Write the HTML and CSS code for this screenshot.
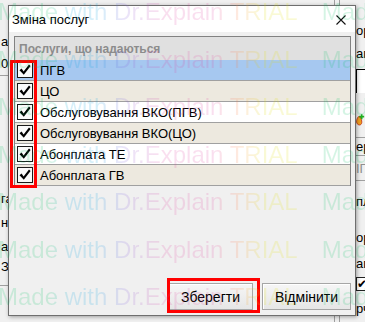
FILE: index.html
```html
<!DOCTYPE html>
<html lang="uk">
<head>
    <meta charset="UTF-8">
    <title>Зміна послуг</title>
    <link rel="stylesheet" href="styles.css">
</head>
<body>
    <!-- вікно позаду діалогу -->
    <div class="desk">
        <div class="desk-left">
            <div class="dl-cell"></div>
            <div class="dl-cell">а</div>
            <div class="dl-cell line">00</div>
            <div class="dl-cell"></div>
            <div class="dl-cell">га</div>
            <div class="dl-cell">на</div>
            <div class="dl-cell">ал</div>
            <div class="dl-cell">ЗІ</div>
            <div class="dl-cell line"></div>
        </div>
        <div class="desk-mid"></div>
        <div class="desk-right">
            <div class="dr-cell"></div>
            <div class="dr-cell">ор</div>
            <div class="dr-cell">аг</div>
            <div class="dr-cell"><span class="dr-box"></span></div>
            <div class="dr-cell">
                <svg class="dr-icon" width="12" height="16" viewBox="0 0 12 16">
                    <path d="M4 4 C1 8 1 13 5 14 C9 14 9 9 6 4 Z" fill="#f2a020" stroke="#c03010" stroke-width="1"/>
                    <path d="M8 1 V7 M5 4 H11" stroke="#20b020" stroke-width="2"/>
                </svg>
            </div>
            <div class="dr-cell line"></div>
            <div class="dr-cell line">ер</div>
            <div class="dr-cell line grey">ІГ</div>
            <div class="dr-cell">пл</div>
            <div class="dr-cell">ор</div>
            <div class="dr-cell">аг</div>
            <div class="dr-cell"><span class="dr-check">✔</span></div>
            <div class="dr-cell">рч</div>
        </div>
    </div>

    <div class="dialog">
        <div class="titlebar">
            <span class="title">Зміна послуг</span>
            <span class="close">
                <svg width="10" height="10" viewBox="0 0 10 10">
                    <path d="M0.5 0.5 L9.5 9.5 M9.5 0.5 L0.5 9.5" stroke="#111" stroke-width="1.1"/>
                </svg>
            </span>
        </div>
        <div class="dialog-body">
            <div class="grid">
                <div class="grid-head">Послуги, що надаються</div>
                <div class="grid-row selected"><span class="check"></span><span>ПГВ</span></div>
                <div class="grid-row odd"><span class="check"></span><span>ЦО</span></div>
                <div class="grid-row"><span class="check"></span><span>Обслуговування ВКО(ПГВ)</span></div>
                <div class="grid-row odd"><span class="check"></span><span>Обслуговування ВКО(ЦО)</span></div>
                <div class="grid-row"><span class="check"></span><span>Абонплата ТЕ</span></div>
                <div class="grid-row odd"><span class="check"></span><span>Абонплата ГВ</span></div>
            </div>
            <div class="buttons">
                <button class="btn btn-save">Зберегти</button>
                <button class="btn btn-cancel">Відмінити</button>
            </div>
        </div>
    </div>

    <!-- червоні рамки-підказки -->
    <div class="mark mark-checks"></div>
    <div class="mark mark-save"></div>

    <div class="watermark">
        <div class="wm-row"><span class="wm">Made with Dr.Explain TRIAL</span><span class="wm">Made with Dr.Explain TRIAL</span></div>
        <div class="wm-row"><span class="wm">Made with Dr.Explain TRIAL</span><span class="wm">Made with Dr.Explain TRIAL</span></div>
        <div class="wm-row"><span class="wm">Made with Dr.Explain TRIAL</span><span class="wm">Made with Dr.Explain TRIAL</span></div>
        <div class="wm-row"><span class="wm">Made with Dr.Explain TRIAL</span><span class="wm">Made with Dr.Explain TRIAL</span></div>
        <div class="wm-row"><span class="wm">Made with Dr.Explain TRIAL</span><span class="wm">Made with Dr.Explain TRIAL</span></div>
        <div class="wm-row"><span class="wm">Made with Dr.Explain TRIAL</span><span class="wm">Made with Dr.Explain TRIAL</span></div>
        <div class="wm-row"><span class="wm">Made with Dr.Explain TRIAL</span><span class="wm">Made with Dr.Explain TRIAL</span></div>
    </div>
</body>
</html>
```

FILE: styles.css
```css
* {
    box-sizing: border-box;
}

body {
    margin: 0;
    width: 365px;
    height: 322px;
    overflow: hidden;
    position: relative;
    background-color: #f0f0f0;
    font-family: 'Liberation Sans', Arial, sans-serif;
    font-size: 13px;
    color: #000;
}

/* фонове вікно */
.desk {
    display: grid;
    grid-template-columns: 60px 1fr 31px;
    height: 322px;
}

.desk-left {
    display: grid;
    grid-template-rows: 30px 22px 24px 111px 23px 24px 24px 16px 12px 1fr;
}

.dl-cell {
    display: flex;
    align-items: center;
    padding-left: 1px;
    white-space: nowrap;
    overflow: hidden;
}

.dl-cell.line {
    border-bottom: 1px solid #a0a0a0;
}

.desk-right {
    display: grid;
    grid-template-rows: 20px 21px 24px 40px 29px 4px 18px 25px 40px 32px 21px 20px 1fr;
    border-left: 1px solid #a0a0a0;
    padding-left: 21px;
    position: relative;
}

.desk-right::before {
    content: '';
    position: absolute;
    left: 4px;
    top: 0;
    bottom: 0;
    border-left: 1px solid #a0a0a0;
}

.dr-cell {
    display: flex;
    align-items: center;
    white-space: nowrap;
    overflow: hidden;
}

.dr-cell.line {
    border-bottom: 1px solid #a0a0a0;
}

.dr-cell.grey {
    color: #909090;
}

.dr-box {
    display: block;
    width: 20px;
    height: 24px;
    margin-top: -8px;
    background: #fff;
    border-left: 1px solid #000;
    border-top: 1px solid #000;
}

.dr-icon {
    margin-left: -1px;
}

.dr-check {
    font-size: 12px;
    display: inline-block;
    border: 1px solid #222;
    background: #fff;
    width: 14px;
    height: 14px;
    line-height: 12px;
}

/* діалог */
.dialog {
    position: absolute;
    left: 8px;
    top: 5px;
    width: 348px;
    height: 311px;
    border: 1px solid #6e6e6e;
    background-color: #f0f0f0;
    box-shadow: 1px 1px 4px rgba(0, 0, 0, 0.35);
    display: flex;
    flex-direction: column;
}

.titlebar {
    height: 26px;
    background-color: #fff;
    display: flex;
    align-items: center;
    justify-content: space-between;
    padding-left: 3px;
    padding-right: 9px;
}

.title {
    font-size: 13px;
}

.close {
    display: flex;
    margin-top: 1px;
}

.dialog-body {
    flex: 1;
    display: flex;
    flex-direction: column;
    padding: 4px 4px 4px 5px;
}

.grid {
    border: 1px solid #828282;
    border-bottom: none;
}

.grid-head {
    height: 23px;
    background-color: #e0e0e0;
    color: #8c8c8c;
    font-weight: bold;
    font-size: 12px;
    display: flex;
    align-items: center;
    padding-left: 4px;
}

.grid-row {
    height: 21px;
    background-color: #fff;
    border-bottom: 1px solid #a0a0a0;
    display: flex;
    align-items: center;
    gap: 7px;
    padding-left: 2px;
}

.grid-row.odd {
    background-color: #ede9df;
}

.grid-row.selected {
    background-color: #a6c8f0;
}

.check {
    width: 16px;
    height: 16px;
    border: 1px solid #1a1a1a;
    background: #fafafa url("data:image/svg+xml,%3Csvg xmlns='http://www.w3.org/2000/svg' viewBox='0 0 14 14'%3E%3Cpath d='M1.5 7.2 L3.6 5.6 L5.6 8.4 L11 1.6 L12.6 2.9 L5.8 11.8 Z' fill='%23000'/%3E%3C/svg%3E") center / 14px 14px no-repeat;
}

.buttons {
    margin-top: auto;
    display: flex;
    justify-content: flex-end;
    gap: 9px;
    margin-bottom: 1px;
}

.btn {
    height: 27px;
    font-family: 'Liberation Sans', Arial, sans-serif;
    font-size: 14px;
    color: #000;
    background: linear-gradient(#f6f6f6, #e6e6e6);
    border: 1px solid #a6a6a6;
    border-radius: 0;
    box-shadow: inset 1px 1px 0 #fff;
    padding: 0;
}

.btn-save {
    width: 85px;
}

.btn-cancel {
    width: 89px;
}

/* червоні рамки */
.mark {
    position: absolute;
    border: 3px solid #ff0000;
}

.mark-checks {
    left: 10px;
    top: 60px;
    width: 27px;
    height: 128px;
}

.mark-save {
    left: 167px;
    top: 278px;
    width: 93px;
    height: 35px;
}

/* водяний знак */
.watermark {
    position: absolute;
    left: -2px;
    top: -12px;
    right: 0;
    pointer-events: none;
    opacity: 0.16;
}

.wm-row {
    height: 47.5px;
    line-height: 47.5px;
    white-space: nowrap;
    font-family: 'Liberation Sans', Arial, sans-serif;
    font-size: 24px;
}

.wm {
    display: inline-block;
    color: transparent;
    background: linear-gradient(90deg, #00c060 0%, #00c060 17%, #00a0e0 24%, #00a0e0 33%, #8060e0 42%, #e040a0 55%, #e040a0 72%, #ff8040 80%, #e0e000 88%, #e0e000 100%);
    -webkit-background-clip: text;
    background-clip: text;
    margin-right: 24px;
}
```
